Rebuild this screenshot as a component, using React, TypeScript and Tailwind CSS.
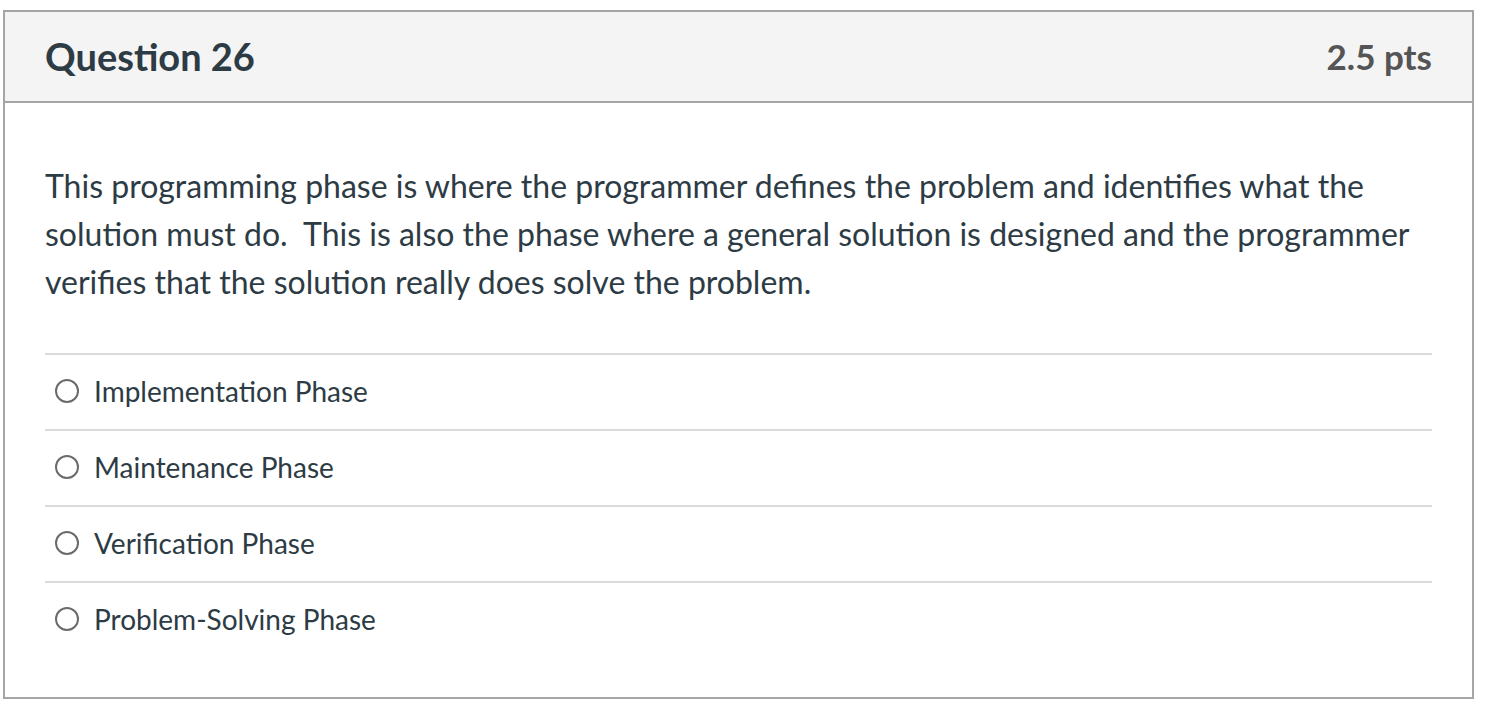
const ANSWERS = [
  'Implementation Phase',
  'Maintenance Phase',
  'Verification Phase',
  'Problem-Solving Phase',
]

export default function App() {
  return (
    <div
      className="min-h-screen bg-white pt-[10px] pl-[3px]"
      style={{ fontFamily: 'Lato, "Liberation Sans", sans-serif' }}
    >
      <div className="w-[1471px] border-2 border-[#a5a5a5] text-[#2d3b45]">
        <div className="flex h-[91px] items-center justify-between border-b-2 border-[#a5a5a5] bg-[#f4f4f4] px-[40px]">
          <h2 className="text-[38px] font-bold">Question 26</h2>
          <span className="text-[35px] font-bold text-[#555555]">2.5 pts</span>
        </div>

        <div className="px-[40px] pt-[59px] pb-[40px]">
          <p className="text-[32px] leading-[48px]">
            This programming phase is where the programmer defines the problem and identifies what the
            solution must do.&nbsp; This is also the phase where a general solution is designed and the
            programmer verifies that the solution really does solve the problem.
          </p>

          <div className="mt-[47px]">
            {ANSWERS.map((a) => (
              <label
                key={a}
                className="flex h-[76px] items-center gap-[15px] border-t-2 border-[#dadada] pb-[3px] pl-[10px]"
              >
                <span className="block size-[24px] shrink-0 rounded-full border-2 border-[#6b6b6b] bg-white" />
                <span className="text-[28px]">{a}</span>
              </label>
            ))}
          </div>
        </div>
      </div>
    </div>
  )
}
